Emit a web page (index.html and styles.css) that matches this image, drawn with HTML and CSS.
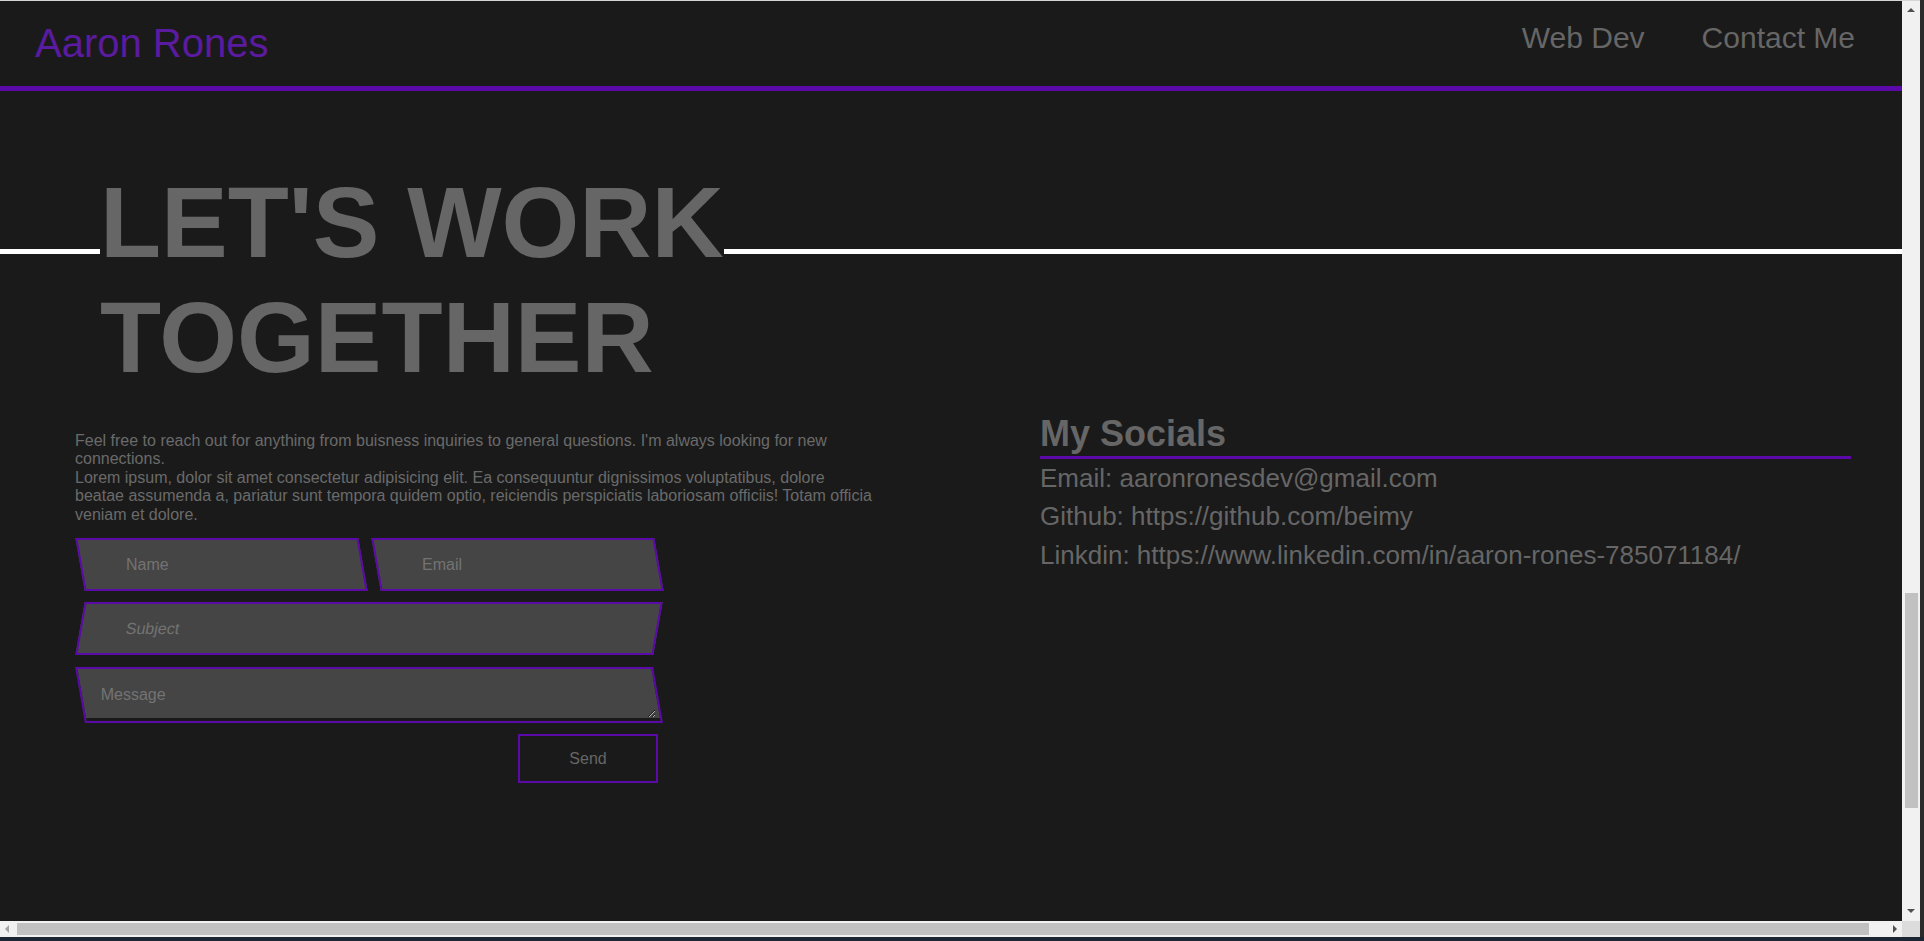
FILE: index.html
```html
<!DOCTYPE html>
<html lang="en">
<head>
<meta charset="utf-8">
<title>Aaron Rones - Contact</title>
<link rel="stylesheet" href="styles.css">
</head>
<body>
<div class="page">
  <header class="topbar">
    <a class="brand" href="#">Aaron Rones</a>
    <nav class="nav">
      <a href="#">Web Dev</a>
      <a href="#">Contact Me</a>
    </nav>
  </header>
  <main>
    <section class="hero">
      <h1 class="hero-title"><span>LET'S WORK TOGETHER</span></h1>
    </section>
    <section class="contact">
      <div class="contact-main">
        <p class="intro">Feel free to reach out for anything from buisness inquiries to general questions. I'm always looking for new connections.<br>Lorem ipsum, dolor sit amet consectetur adipisicing elit. Ea consequuntur dignissimos voluptatibus, dolore beatae assumenda a, pariatur sunt tempora quidem optio, reiciendis perspiciatis laboriosam officiis! Totam officia veniam et dolore.</p>
        <form class="contact-form">
          <div class="field"><input type="text" placeholder="Name"></div>
          <div class="field"><input type="email" placeholder="Email"></div>
          <div class="field field-wide field-subject"><input type="text" placeholder="Subject"></div>
          <div class="field field-wide field-message"><textarea placeholder="Message"></textarea></div>
          <button type="button" class="send">Send</button>
        </form>
      </div>
      <aside class="socials">
        <h2>My Socials</h2>
        <p>Email: aaronronesdev@gmail.com</p>
        <p>Github: https://github.com/beimy</p>
        <p>Linkdin: https://www.linkedin.com/in/aaron-rones-785071184/</p>
      </aside>
    </section>
  </main>
</div>

<div class="sb-v">
  <span class="arrow arrow-up"></span>
  <span class="sb-v-thumb"></span>
  <span class="arrow arrow-down"></span>
</div>
<div class="sb-h">
  <span class="arrow arrow-left"></span>
  <span class="sb-h-thumb"></span>
  <span class="arrow arrow-right"></span>
</div>
<div class="sb-corner"></div>
<div class="edge-right"></div>
<div class="edge-bottom"></div>
</body>
</html>
```

FILE: styles.css
```css
html, body {
  margin: 0;
  height: 100%;
}

body {
  box-sizing: border-box;
  border-top: 1px solid #d6d6d6;
  background: #1a1a1a;
  overflow: hidden;
  font-family: "Liberation Sans", Arial, sans-serif;
  color: #666;
}

.page {
  width: 1902px;
}

/* ---------- header ---------- */
.topbar {
  box-sizing: border-box;
  height: 90px;
  padding: 19px 47px 0 35px;
  border-bottom: 5px solid #5b0aa9;
  display: flex;
  justify-content: space-between;
  align-items: flex-start;
}

.brand {
  font-size: 40px;
  line-height: 1.15;
  color: #5b1ba1;
  text-decoration: none;
}

.nav {
  display: flex;
  gap: 57px;
  padding-top: 0.5px;
}

.nav a {
  font-size: 30px;
  line-height: 1.15;
  color: #666;
  text-decoration: none;
}

/* ---------- hero ---------- */
.hero {
  padding: 74px 0 0 100px;
  background: linear-gradient(to bottom,
    transparent 158px, #ffffff 158px,
    #ffffff 163px, transparent 163px);
}

.hero-title {
  margin: 0;
  max-width: 720px;
  font-size: 100px;
  font-weight: 700;
  line-height: 115px;
  color: #666;
}

.hero-title span {
  background: #1a1a1a;
}

/* ---------- contact ---------- */
.contact {
  display: grid;
  grid-template-columns: 798px 1fr;
  column-gap: 167px;
  padding: 18px 51px 0 75px;
  align-items: start;
}

.intro {
  margin: 19px 0 0;
  font-size: 16px;
  line-height: 18.4px;
  color: #6a6a6a;
}

.contact-form {
  margin: 14px 0 0 5px;
  width: 578px;
  display: grid;
  grid-template-columns: 1fr 1fr;
  column-gap: 13px;
  row-gap: 11px;
}

.field {
  box-sizing: border-box;
  height: 53px;
  border: 2px solid #5b0aa9;
  background: #454545;
  transform: skewX(10deg);
}

.field-wide {
  grid-column: 1 / -1;
}

.field-subject {
  transform: skewX(-10deg);
}

.field-message {
  height: 56px;
  margin-top: 1px;
  background: linear-gradient(to top, #1a1a1a 3px, #454545 3px);
}

.field input,
.field textarea {
  display: block;
  box-sizing: border-box;
  width: 100%;
  height: 100%;
  margin: 0;
  border: 0;
  outline: none;
  background: transparent;
  font-family: "Liberation Sans", Arial, sans-serif;
  font-size: 16px;
  color: #888;
  padding: 0 0 0 44px;
  transform: skewX(-10deg);
}

.field-subject input {
  transform: none;
}

.field textarea {
  height: 49px;
  padding: 17px 19px 0;
  line-height: 18.4px;
  resize: both;
  overflow: hidden;
}

.field input::placeholder,
.field textarea::placeholder {
  color: #737373;
  opacity: 1;
}

.send {
  grid-column: 1 / -1;
  justify-self: end;
  width: 140px;
  height: 49px;
  border: 2px solid #5b0aa9;
  background: transparent;
  color: #666;
  font-family: "Liberation Sans", Arial, sans-serif;
  font-size: 16px;
}

/* ---------- socials ---------- */
.socials h2 {
  margin: 0;
  font-size: 36px;
  font-weight: 700;
  line-height: 42.5px;
  color: #666;
  border-bottom: 3px solid #5b0aa9;
}

.socials p {
  margin: 0;
  font-size: 26px;
  line-height: 38.5px;
  color: #666;
}

/* ---------- browser chrome (scrollbars) ---------- */
.sb-v {
  position: fixed;
  top: 1px;
  left: 1902px;
  width: 18px;
  height: 920px;
  background: #f1f1f1;
}

.sb-v-thumb {
  position: absolute;
  left: 3px;
  top: 592px;
  width: 13px;
  height: 215px;
  background: #c1c1c1;
}

.sb-h {
  position: fixed;
  left: 0;
  top: 921px;
  width: 1902px;
  height: 16px;
  background: #f1f1f1;
}

.sb-h-thumb {
  position: absolute;
  left: 17px;
  top: 2px;
  width: 1852px;
  height: 12px;
  background: #c1c1c1;
}

.sb-corner {
  position: fixed;
  left: 1902px;
  top: 921px;
  width: 18px;
  height: 16px;
  background: #dcdcdc;
}

.edge-right {
  position: fixed;
  left: 1920px;
  top: 0;
  width: 4px;
  height: 100%;
  background: #2b2b2b;
}

.edge-bottom {
  position: fixed;
  left: 0;
  top: 937px;
  width: 100%;
  height: 4px;
  background: #1c2632;
}

.arrow {
  position: absolute;
  width: 0;
  height: 0;
  border: 4px solid transparent;
}

.arrow-up {
  left: 5px;
  top: 3px;
  border-bottom-color: #505050;
}

.arrow-down {
  left: 5px;
  top: 908px;
  border-top-color: #505050;
}

.arrow-left {
  left: 1px;
  top: 4px;
  border-right-color: #a3a3a3;
}

.arrow-right {
  left: 1893px;
  top: 4px;
  border-left-color: #505050;
}
```
